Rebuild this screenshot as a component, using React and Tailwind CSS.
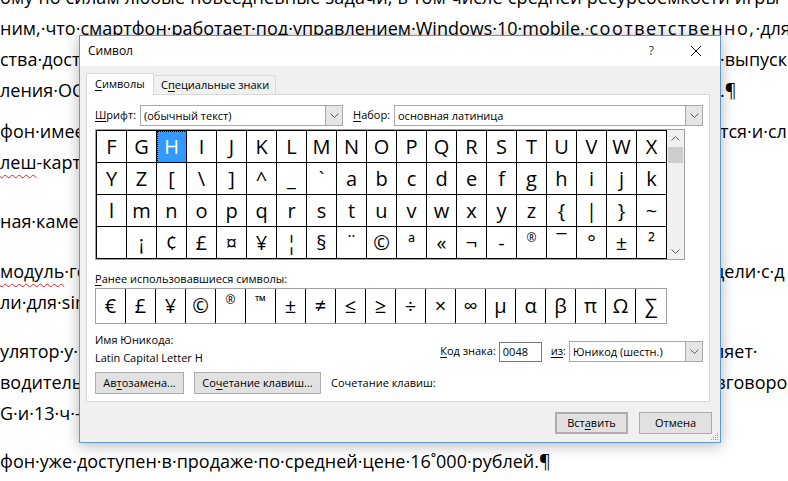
import React from "react";

const grid = [
  ["F", "G", "H", "I", "J", "K", "L", "M", "N", "O", "P", "Q", "R", "S", "T", "U", "V", "W", "X"],
  ["Y", "Z", "[", "\\", "]", "^", "_", "`", "a", "b", "c", "d", "e", "f", "g", "h", "i", "j", "k"],
  ["l", "m", "n", "o", "p", "q", "r", "s", "t", "u", "v", "w", "x", "y", "z", "{", "|", "}", "~"],
  ["\u00a0", "¡", "¢", "£", "¤", "¥", "¦", "§", "¨", "©", "ª", "«", "¬", "-", "®", "¯", "°", "±", "²"],
];

const recent = ["€", "£", "¥", "©", "®", "™", "±", "≠", "≤", "≥", "÷", "×", "∞", "µ", "α", "β", "π", "Ω", "∑"];

const wavy = "underline decoration-wavy decoration-[#e02020] decoration-1 underline-offset-[5px]";

// lines of the Word page behind the dialog
const lines = [
  {
    mt: "-mt-[18px]",
    left: <span className="tracking-[0.15px]">ому·по·силам·любые·повседневные·задачи,·в·том·числе·средней·ресурсоемкости·игры</span>,
  },
  {
    mt: "",
    left: (
      <>
        ним,·что·смартфон·работает·под·управлением·Windows·10·mobile.·
        <span className="tracking-[1.5px]">соответственно,</span>·для
      </>
    ),
  },
  { mt: "", left: "ства·доступны", right: "·выпуск", rm: "" },
  { mt: "", left: "ления·ОС·", right: ".¶", rm: "" },
  { mt: "mt-[10px]", left: "фон·имеет", right: "тся·и·сл", rm: "" },
  { mt: "", left: <><span className={wavy}>леш</span>-карт·</> },
  { mt: "mt-[28px]", left: "ная·камера" },
  { mt: "mt-[19px]", left: <><span className={wavy}>модуль</span>·гор</>, right: "дели·с·д", rm: "-ml-[6px]" },
  { mt: "", left: "ли·для·sim" },
  { mt: "mt-[18px]", left: "улятор·у·", right: "ляет·", rm: "-ml-[6px]" },
  { mt: "", left: "водитель", right: "зговоро", rm: "-ml-[3px]" },
  { mt: "", left: "G·и·13·ч·–" },
  { mt: "mt-[17px]", left: "фон·уже·доступен·в·продаже·по·средней·цене·16˚000·рублей.¶" },
];

function Chevron({ up = false }) {
  return (
    <svg width="9" height="5" viewBox="0 0 9 5" fill="none">
      <polyline
        points={up ? "0.5,4.5 4.5,0.5 8.5,4.5" : "0.5,0.5 4.5,4.5 8.5,0.5"}
        stroke="#606060"
        strokeWidth="1"
      />
    </svg>
  );
}

function Combo({ className, text }) {
  return (
    <div className={`flex h-[21px] border border-[#a9a9a9] bg-white ${className}`}>
      <div className="flex-1 pl-[3px] leading-[19px] whitespace-nowrap overflow-hidden">{text}</div>
      <div className="w-[17px] h-full bg-[#e5e5e5] border-l border-[#a9a9a9] flex items-center justify-center">
        <Chevron />
      </div>
    </div>
  );
}

function Btn({ className, children }) {
  return (
    <div
      className={`h-[22px] bg-[#e1e1e1] border border-[#adadad] flex items-center justify-center whitespace-nowrap ${className}`}
    >
      {children}
    </div>
  );
}

function Cell({ ch, selected }) {
  return (
    <div
      className={`w-[30px] h-[32px] border-b border-r border-black flex items-center justify-center ${
        selected ? "bg-[#3399ff] text-white outline-1 outline-dotted outline-black -outline-offset-1" : ""
      }`}
    >
      <span className={ch === "®" ? "text-[12px] -mt-[10px]" : ""}>{ch}</span>
    </div>
  );
}

function Dialog() {
  return (
    <div className="absolute left-[79px] top-[35px] w-[642px] h-[408px] border border-[#5a9bd8] bg-[#f0f0f0] shadow-[0_2px_14px_rgba(0,0,0,0.3)] flex flex-col font-['Open_Sans','DejaVu_Sans',sans-serif] text-[11px] text-black">
      <div className="h-[30px] shrink-0 bg-white flex items-center pl-[8px]">
        <span className="text-[12px]">Символ</span>
        <span className="ml-auto mr-[37px] text-[12px] text-[#333]">?</span>
        <svg width="10" height="10" viewBox="0 0 10 10" className="mr-[19px]">
          <line x1="0" y1="0" x2="10" y2="10" stroke="#111" strokeWidth="1" />
          <line x1="10" y1="0" x2="0" y2="10" stroke="#111" strokeWidth="1" />
        </svg>
      </div>

      <div className="pt-[7px] pl-[6px]">
        <div className="flex items-end">
          <div className="relative z-10 -mb-px h-[22px] w-[68px] pl-[8px] bg-white border border-b-0 border-[#d9d9d9] leading-[20px]">
            <span className="underline underline-offset-2">С</span>имволы
          </div>
          <div className="h-[19px] w-[122px] pl-[7px] bg-[#f0f0f0] border border-l-0 border-b-0 border-[#d9d9d9] leading-[18px]">
            С<span className="underline underline-offset-2">п</span>ециальные знаки
          </div>
        </div>

        <div className="w-[624px] h-[308px] border border-[#d9d9d9] bg-white pl-[8px] pr-[6px] pt-[10px]">
          <div className="flex items-center h-[21px]">
            <span className="w-[45px]">
              <span className="underline underline-offset-2">Ш</span>рифт:
            </span>
            <Combo className="w-[203px]" text="(обычный текст)" />
            <span className="ml-[10px] w-[41px]">
              <span className="underline underline-offset-2">Н</span>абор:
            </span>
            <Combo className="w-[309px]" text="основная латиница" />
          </div>

          <div className="mt-[3px] w-[590px] flex border border-[#a0a0a0] text-[20px] leading-none">
            <div className="border-l border-t border-black">
              {grid.map((row, r) => (
                <div key={r} className="flex">
                  {row.map((ch, c) => (
                    <Cell key={c} ch={ch} selected={r === 0 && c === 2} />
                  ))}
                </div>
              ))}
            </div>
            <div className="w-[17px] bg-[#f0f0f0] flex flex-col items-center">
              <div className="h-[16px] flex items-center">
                <Chevron up />
              </div>
              <div className="mt-[1px] w-[15px] h-[16px] bg-[#cdcdcd]" />
              <div className="mt-auto h-[16px] flex items-center">
                <Chevron />
              </div>
            </div>
          </div>

          <div className="mt-[11px] h-[16px] leading-[16px]">
            <span className="underline underline-offset-2">Р</span>анее использовавшиеся символы:
          </div>
          <div className="mt-[1px] w-[572px] flex border border-[#a0a0a0] text-[20px] leading-none">
            {recent.map((ch, i) => (
              <div
                key={i}
                className={`w-[30px] h-[34px] flex items-center justify-center ${i < recent.length - 1 ? "border-r border-black" : ""}`}
              >
                <span className={ch === "®" ? "text-[12px] -mt-[12px]" : ch === "™" ? "text-[14px] -mt-[10px] font-semibold" : ""}>
                  {ch}
                </span>
              </div>
            ))}
          </div>

          <div className="mt-[7px] flex items-start">
            <div>
              <div className="h-[18px] leading-[18px]">Имя Юникода:</div>
              <div className="h-[18px] leading-[18px]">Latin Capital Letter H</div>
            </div>
            <div className="ml-auto mt-[10px] flex items-center">
              <span>
                <span className="underline underline-offset-2">К</span>од знака:
              </span>
              <div className="ml-[3px] w-[43px] h-[20px] border border-[#7a7a7a] bg-white pl-[3px] leading-[18px]">0048</div>
              <span className="ml-[9px]">
                <span className="underline underline-offset-2">из</span>:
              </span>
              <Combo className="ml-[3px] w-[134px] h-[20px]" text="Юникод (шестн.)" />
            </div>
          </div>

          <div className="mt-[5px] flex items-center">
            <Btn className="w-[89px]">
              Ав<span className="underline underline-offset-2">т</span>озамена...
            </Btn>
            <Btn className="ml-[10px] w-[127px]">
              Со<span className="underline underline-offset-2">ч</span>етание клавиш...
            </Btn>
            <span className="ml-[10px]">Сочетание клавиш:</span>
          </div>
        </div>
      </div>

      <div className="mt-[10px] pr-[8px] flex justify-end">
        <Btn className="w-[73px] h-[21px] border-2 border-[#0078d7]">
          Вст<span className="underline underline-offset-2">а</span>вить
        </Btn>
        <Btn className="ml-[11px] w-[73px] h-[21px]">Отмена</Btn>
      </div>

      <svg width="8" height="8" viewBox="0 0 8 8" className="absolute right-[1px] bottom-[1px]">
        <rect x="6" y="0" width="1" height="1" fill="#9a9a9a" />
        <rect x="4" y="2" width="1" height="1" fill="#9a9a9a" />
        <rect x="6" y="2" width="1" height="1" fill="#9a9a9a" />
        <rect x="2" y="4" width="1" height="1" fill="#9a9a9a" />
        <rect x="4" y="4" width="1" height="1" fill="#9a9a9a" />
        <rect x="6" y="4" width="1" height="1" fill="#9a9a9a" />
        <rect x="0" y="6" width="1" height="1" fill="#9a9a9a" />
        <rect x="2" y="6" width="1" height="1" fill="#9a9a9a" />
        <rect x="4" y="6" width="1" height="1" fill="#9a9a9a" />
        <rect x="6" y="6" width="1" height="1" fill="#9a9a9a" />
      </svg>
    </div>
  );
}

export default function App() {
  return (
    <div className="relative w-[788px] h-[481px] overflow-hidden bg-white">
      <div className="font-['Open_Sans','DejaVu_Sans',sans-serif] text-[18px] text-black">
        {lines.map((l, i) => (
          <div key={i} className={`flex h-[31px] leading-[31px] whitespace-nowrap ${l.mt}`}>
            <div className={l.right ? "w-[720px] shrink-0 overflow-hidden" : "shrink-0"}>{l.left}</div>
            {l.right && <div className={l.rm}>{l.right}</div>}
          </div>
        ))}
      </div>
      <Dialog />
    </div>
  );
}
